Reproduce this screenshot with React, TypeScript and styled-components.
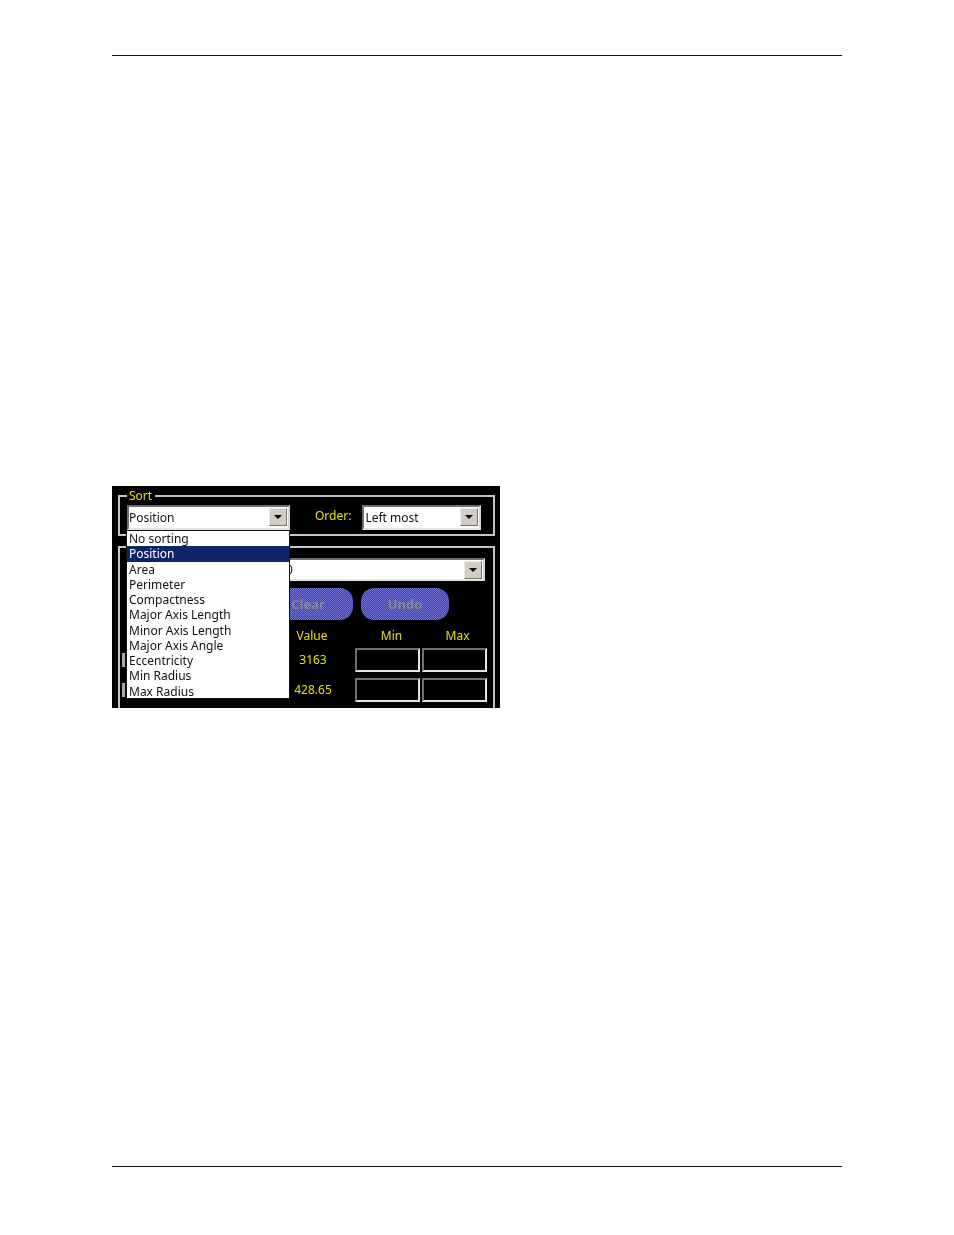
import React from 'react';
import styled, { createGlobalStyle } from 'styled-components';

const GlobalStyle = createGlobalStyle`
  html, body {
    margin: 0;
    padding: 0;
    background: #fffffd;
  }
`;

const Page = styled.div`
  width: 954px;
  height: 1235px;
  box-sizing: border-box;
  padding: 55px 112px 68px;
  display: flex;
  flex-direction: column;
  overflow: hidden;
`;

const Rule = styled.hr`
  width: 730px;
  height: 1px;
  margin: 0;
  border: 0;
  background: #111;
  flex: none;
`;

const Panel = styled.section`
  position: relative;
  width: 388px;
  height: 222px;
  margin: 430px 0 auto;
  box-sizing: border-box;
  padding: 4px 5px 0 6px;
  background: #000;
  overflow: hidden;
  color: #e6e000;
  font-family: "Noto Sans", sans-serif;
  font-size: 12px;
  filter: blur(0.25px);
`;

const Group = styled.fieldset<{ $top?: number }>`
  margin: ${({ $top }) => $top || 0}px 0 0 0;
  padding: 0 6px 0 7px;
  min-width: 0;
  border: 2px solid #c4c4c4;
`;

const GroupTitle = styled.legend`
  margin-left: 0;
  padding: 0 3px 0 2px;
  height: 12px;
  line-height: 12px;
  font-size: 12px;
`;

const SortRow = styled.div`
  display: flex;
  align-items: center;
  height: 28px;
  margin-top: 1px;
  margin-bottom: 3px;
`;

const OrderLabel = styled.label`
  margin: -3px 11px 0 25px;
  color: #e6e000;
`;

const Select = styled.div<{ $width: number; $height: number; $inset?: number; $top?: number }>`
  flex: none;
  display: flex;
  align-items: center;
  justify-content: space-between;
  width: ${({ $width }) => $width}px;
  height: ${({ $height }) => $height}px;
  margin-top: ${({ $top }) => $top || 0}px;
  box-sizing: border-box;
  padding: 0 1px 0 ${({ $inset }) => $inset ?? 2}px;
  background: #fff;
  color: #111;
  border: 2px solid;
  border-color: #6f6f6f #d8d8d0 #e6e6e0 #6f6f6f;
`;

const ArrowButton = styled.span`
  flex: none;
  width: 18px;
  height: 18px;
  display: flex;
  align-items: center;
  justify-content: center;
  background: #d0cdc5;
  border: 1px solid;
  border-color: #eeece6 #77756f #77756f #eeece6;
  box-sizing: border-box;
`;

const ActionRow = styled.div`
  display: flex;
  justify-content: flex-end;
  gap: 8px;
  margin: 7px 38px 0 0;
`;

const ActionButton = styled.button<{ $width: number }>`
  width: ${({ $width }) => $width}px;
  height: 32px;
  padding: 0;
  border: 0;
  border-radius: 13px;
  color: #8a8a8e;
  font-family: "Noto Sans", sans-serif;
  font-size: 13px;
  font-weight: 700;
  background: repeating-conic-gradient(#7373d6 0 25%, #3f3fa6 0 50%) 0 0 / 2px 2px;
`;

const MeasureGrid = styled.div`
  display: grid;
  grid-template-columns: 4px 228px 67px 65px;
  margin: 9px 0 0 -4px;
`;

const HeadCell = styled.span<{ $col: number; $shift?: number }>`
  grid-column: ${({ $col }) => $col};
  height: 19px;
  line-height: 14px;
  text-align: center;
  transform: translateX(${({ $shift }) => $shift || 0}px);
`;

const ValueHead = styled(HeadCell)`
  padding-left: 154px;
  width: 62px;
`;

const Handle = styled.span`
  grid-column: 1;
  align-self: center;
  width: 3px;
  height: 14px;
  margin: -6px 0 0 -1px;
  background: #a8a8a8;
`;

const ValueCell = styled.span`
  grid-column: 2;
  height: 30px;
  line-height: 24px;
  padding-left: 155px;
  width: 62px;
  text-align: center;
  white-space: nowrap;
`;

const FieldBox = styled.span<{ $col: number }>`
  grid-column: ${({ $col }) => $col};
  width: 65px;
  height: 24px;
  box-sizing: border-box;
  background: #000;
  border: 2px solid;
  border-color: #707070 #e4e4e4 #e4e4e4 #707070;
`;

const DropMenu = styled.ul`
  position: absolute;
  left: 14px;
  top: 44px;
  width: 164px;
  height: 169px;
  box-sizing: border-box;
  margin: 0;
  padding: 0;
  list-style: none;
  background: #fff;
  border: 1px solid #111;
  color: #111;
`;

const MenuItem = styled.li<{ $active?: boolean }>`
  height: 15.25px;
  line-height: 15.25px;
  padding-left: 2px;
  white-space: nowrap;
  background: ${({ $active }) => ($active ? '#0f2468' : 'transparent')};
  color: ${({ $active }) => ($active ? '#fff' : '#111')};
`;

const Arrow = () => (
  <svg width="8" height="4" viewBox="0 0 8 4">
    <path d="M0 0h8L4 4z" fill="#000" />
  </svg>
);

const sortOptions = [
  'No sorting',
  'Position',
  'Area',
  'Perimeter',
  'Compactness',
  'Major Axis Length',
  'Minor Axis Length',
  'Major Axis Angle',
  'Eccentricity',
  'Min Radius',
  'Max Radius',
];

const rows = ['3163', '428.65'];

const App = () => (
  <Page>
    <GlobalStyle />
    <Rule />
    <Panel>
      <Group>
        <GroupTitle>Sort</GroupTitle>
        <SortRow>
          <Select $width={163} $height={25} $inset={0}>
            Position
            <ArrowButton><Arrow /></ArrowButton>
          </Select>
          <OrderLabel>Order:</OrderLabel>
          <Select $width={119} $height={25} $inset={1}>
            Left most
            <ArrowButton><Arrow /></ArrowButton>
          </Select>
        </SortRow>
      </Group>
      <Group $top={10}>
        <Select $width={358} $height={23} $inset={157} $top={10}>
          0
          <ArrowButton><Arrow /></ArrowButton>
        </Select>
        <ActionRow>
          <ActionButton $width={90}>Clear</ActionButton>
          <ActionButton $width={88}>Undo</ActionButton>
        </ActionRow>
        <MeasureGrid>
          <ValueHead $col={2}>Value</ValueHead>
          <HeadCell $col={3} $shift={3}>Min</HeadCell>
          <HeadCell $col={4} $shift={3}>Max</HeadCell>
          {rows.map((value) => (
            <React.Fragment key={value}>
              <Handle />
              <ValueCell>{value}</ValueCell>
              <FieldBox $col={3} />
              <FieldBox $col={4} />
            </React.Fragment>
          ))}
        </MeasureGrid>
      </Group>
      <DropMenu>
        {sortOptions.map((option) => (
          <MenuItem key={option} $active={option === 'Position'}>{option}</MenuItem>
        ))}
      </DropMenu>
    </Panel>
    <Rule />
  </Page>
);

export default App;
